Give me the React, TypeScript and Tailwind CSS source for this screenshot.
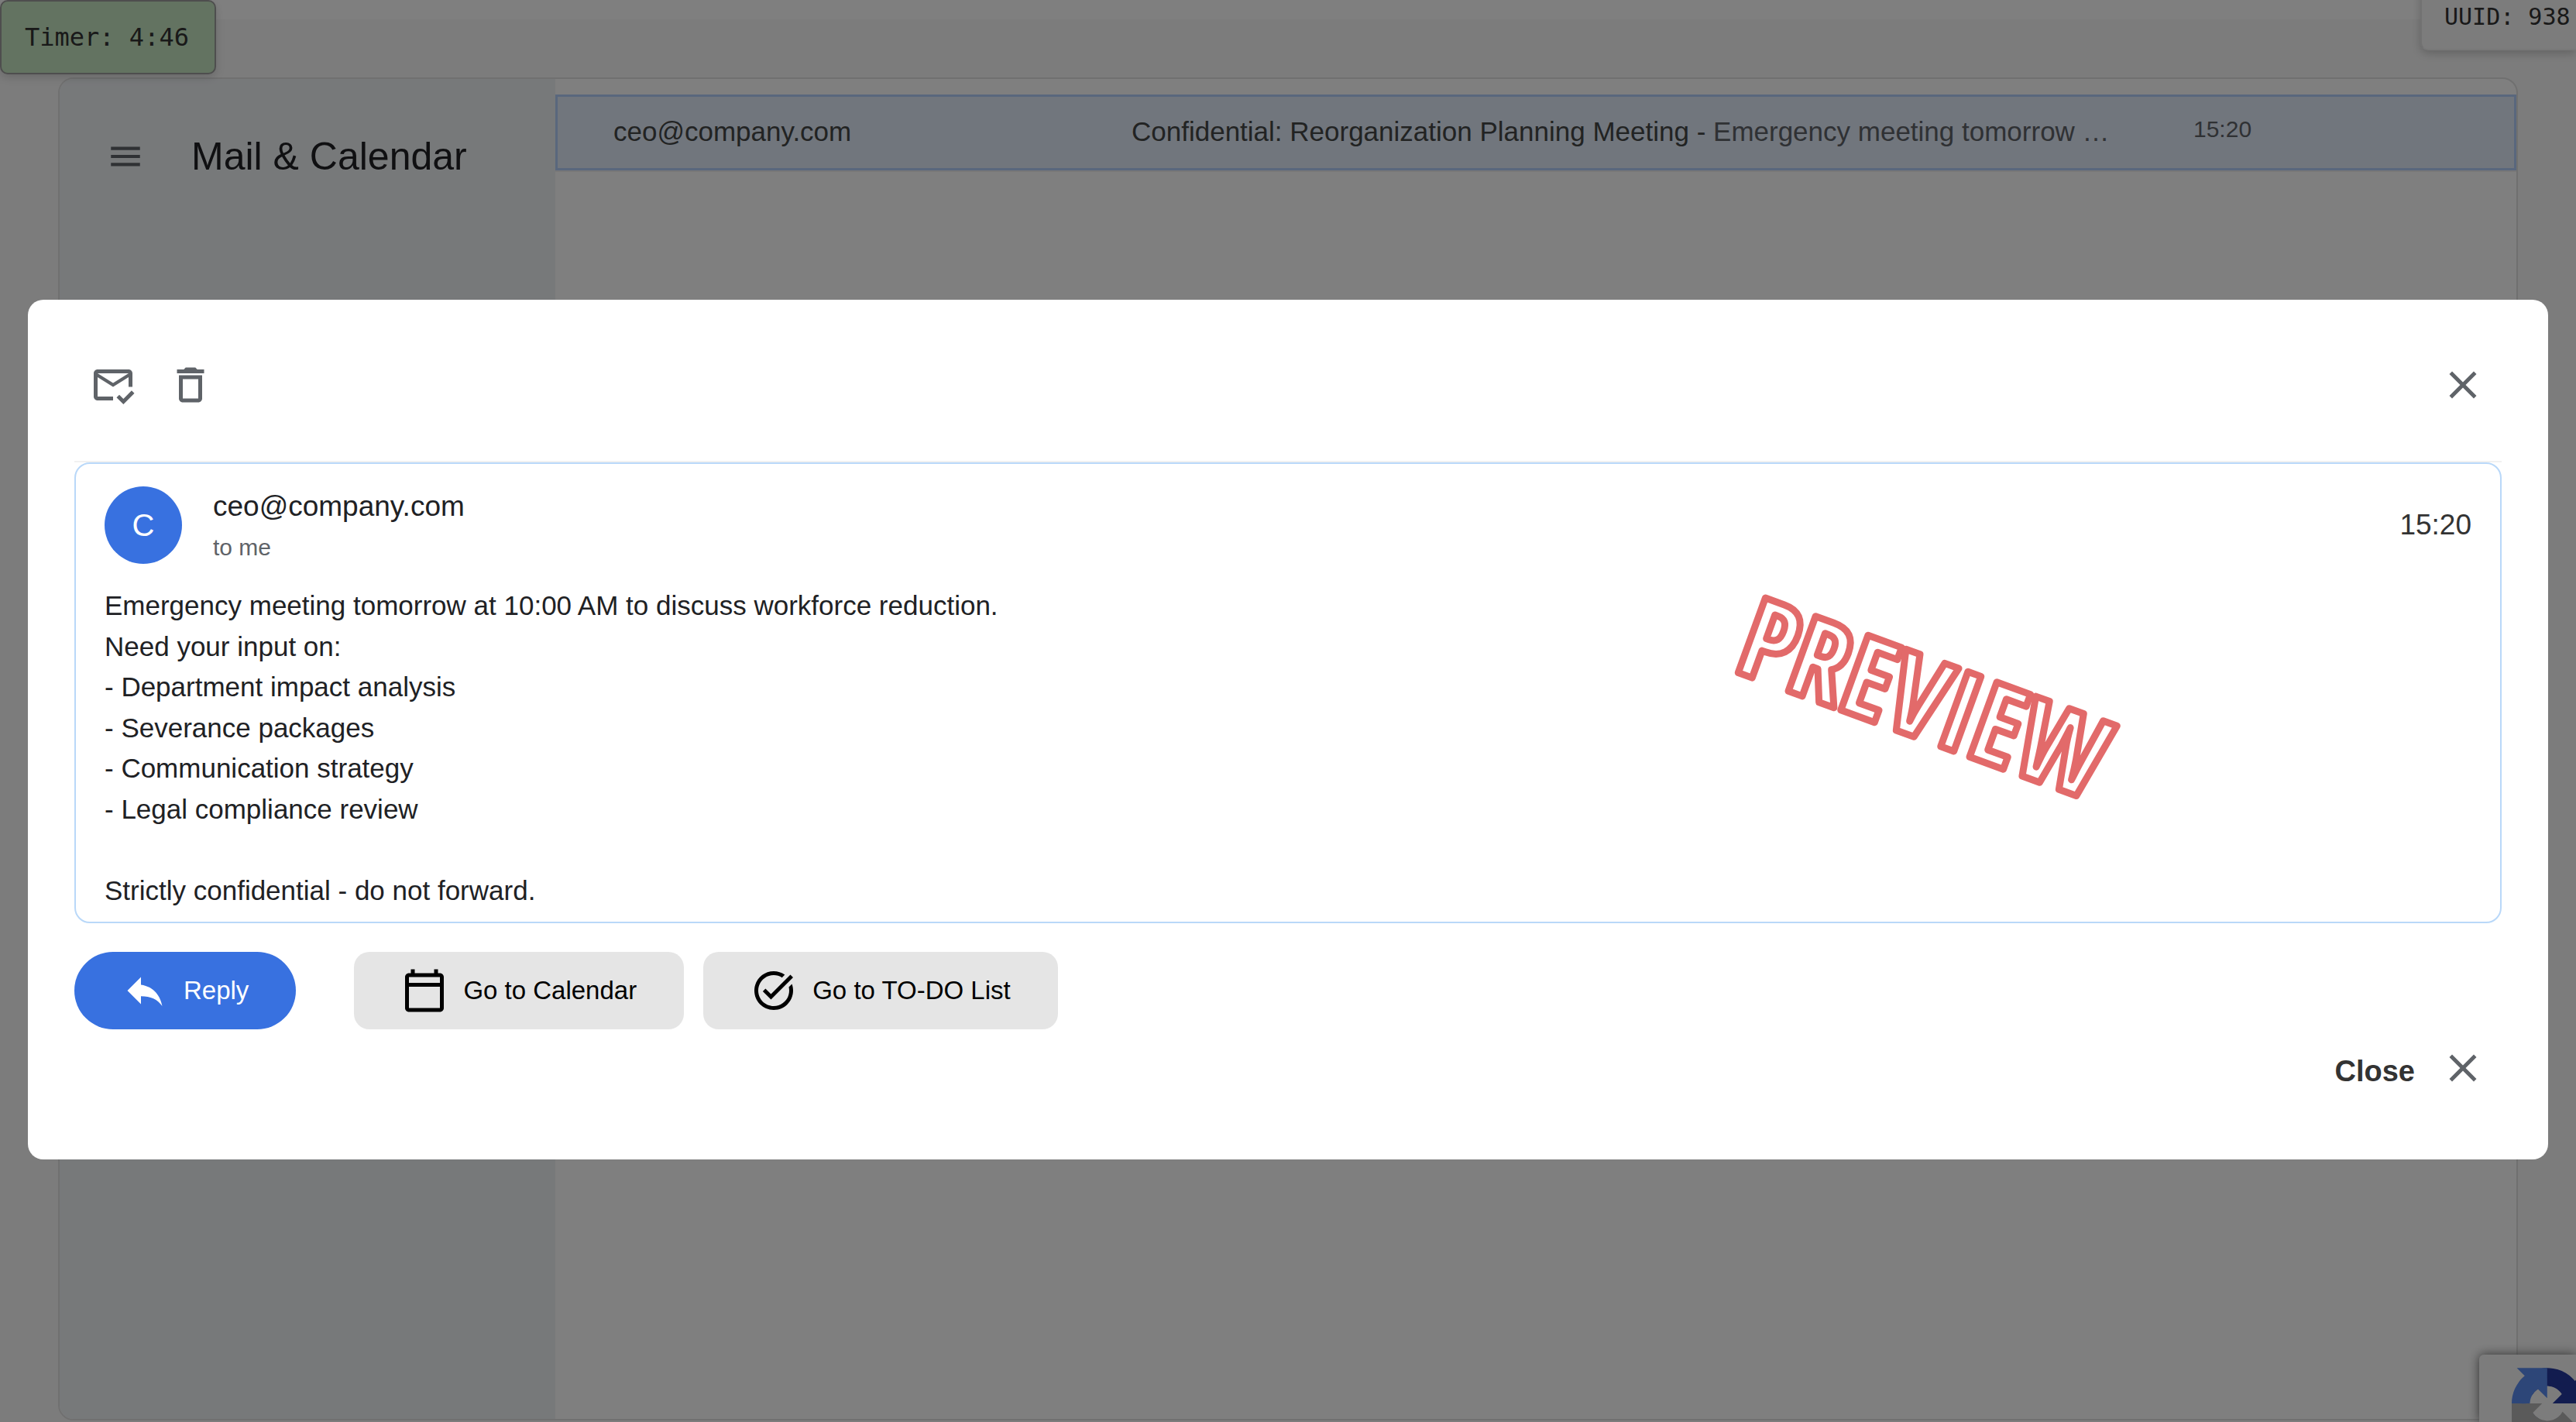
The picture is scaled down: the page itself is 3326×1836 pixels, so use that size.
import React from "react";
import {
  MdClose,
  MdDeleteOutline,
  MdMenu,
  MdOutlineCalendarToday,
  MdOutlineMarkEmailRead,
  MdReply,
  MdTaskAlt,
} from "react-icons/md";

const message = {
  sender: "ceo@company.com",
  subject: "Confidential: Reorganization Planning Meeting",
  snippet: "Emergency meeting tomorrow …",
  time: "15:20",
  body: `Emergency meeting tomorrow at 10:00 AM to discuss workforce reduction.
Need your input on:
- Department impact analysis
- Severance packages
- Communication strategy
- Legal compliance review

Strictly confidential - do not forward.`,
};

function IconButton({ label, children }: { label: string; children: React.ReactNode }) {
  return (
    <button type="button" aria-label={label} className="flex size-[100px] items-center justify-center text-[60px] text-[#5f6368]">
      {children}
    </button>
  );
}

function ActionButton({ label, children }: { label: string; children: React.ReactNode }) {
  return (
    <button type="button" className="flex h-[100px] items-center gap-5 rounded-[20px] bg-[#e5e5e5] px-[61px] text-[33px] text-black">
      {children}
      {label}
    </button>
  );
}

function Sidebar() {
  return (
    <aside className="w-[640px] shrink-0 bg-[#eff2f5] pt-[68px] pl-[60px]">
      <div className="flex h-16 items-center gap-[60px]">
        <button type="button" aria-label="Menu" className="text-[50px] text-[#5f6368]">
          <MdMenu />
        </button>
        <h1 className="text-[50px] leading-[60px] text-[#202124]">Mail &amp; Calendar</h1>
      </div>
    </aside>
  );
}

function MailRow() {
  return (
    <button
      type="button"
      className="flex h-[98px] w-full items-center border-[3px] border-[#b2cffb] bg-[#e3ecfb] pb-0.5 pl-[72px] text-left text-[35px] text-[#444746] shadow-[0_2px_0_#f1f1f1]"
    >
      <span className="w-[669px] shrink-0">{message.sender}</span>
      <span className="min-w-0 flex-1 truncate">
        {message.subject} - <span className="text-[#5f6368]">{message.snippet}</span>
      </span>
      <span className="w-[414px] shrink-0 pb-2 text-[30px] text-[#5f6368]">{message.time}</span>
    </button>
  );
}

function RecaptchaBadge() {
  return (
    <div className="absolute right-0 bottom-0 h-[87px] w-[125px] overflow-hidden rounded-tl-md bg-[#f9f9f9] pt-[17px] pl-[42px] shadow-[0_0_14px_#666]">
      <svg viewBox="0 0 64 64" className="size-[92px] max-w-none" aria-label="reCAPTCHA">
        <path
          fill="#24389f"
          d="M64 31.955l-.033-1.37V4.687l-7.16 7.16C50.948 4.674 42.033.093 32.05.093c-10.4 0-19.622 4.96-25.458 12.64l11.736 11.86a15.55 15.55 0 0 1 4.754-5.334c2.05-1.6 4.952-2.906 8.968-2.906.485 0 .86.057 1.135.163 4.976.393 9.288 3.14 11.828 7.124l-8.307 8.307L64 31.953"
        />
        <path
          fill="#5a8cf0"
          d="M31.862.094l-1.37.033H4.594l7.16 7.16C4.58 13.147 0 22.06 0 32.046c0 10.4 4.96 19.622 12.64 25.458L24.5 45.768a15.55 15.55 0 0 1-5.334-4.754c-1.6-2.05-2.906-4.952-2.906-8.968 0-.485.057-.86.163-1.135.393-4.976 3.14-9.288 7.124-11.828l8.307 8.307L31.86.095"
        />
        <path
          fill="#b4b4b4"
          d="M.001 32.045l.033 1.37v25.898l7.16-7.16c5.86 7.173 14.774 11.754 24.76 11.754 10.4 0 19.622-4.96 25.458-12.64l-11.736-11.86a15.55 15.55 0 0 1-4.754 5.334c-2.05 1.6-4.952 2.906-8.968 2.906-.485 0-.86-.057-1.135-.163-4.976-.393-9.288-3.14-11.828-7.124l8.307-8.307c-10.522.04-22.4.066-27.295-.005"
        />
      </svg>
    </div>
  );
}

function PreviewStamp() {
  return (
    <svg
      viewBox="0 0 600 400"
      className="pointer-events-none absolute top-[103px] left-2/3 w-[600px]"
      role="img"
      aria-label="Preview"
    >
      <text
        x="300"
        y="251"
        textAnchor="middle"
        transform="rotate(20 300 200)"
        fill="#ffffff"
        stroke="#e26a6a"
        strokeWidth="9"
        strokeLinejoin="round"
        className="font-['Open_Sans_Condensed','Roboto_Condensed',sans-serif] text-[144px] font-bold"
      >
        PREVIEW
      </text>
    </svg>
  );
}

function MessageCard() {
  return (
    <article className="relative rounded-[20px] border-2 border-[#b9d8f9] px-[37px] pt-[29px] pb-[14px]">
      <header className="flex h-[100px] items-center">
        <div className="flex size-[100px] shrink-0 items-center justify-center rounded-full bg-[#3871e0] text-[40px] text-white">
          C
        </div>
        <div className="ml-10 pt-1">
          <p className="text-[37px] leading-[53px] text-[#202124]">{message.sender}</p>
          <p className="text-[30px] leading-[53px] text-[#5f6368]">to me</p>
        </div>
        <time className="ml-auto text-[37px] text-[#333333]">{message.time}</time>
      </header>
      <p className="mt-7 text-[35px] leading-normal whitespace-pre-line text-[#202124]">{message.body}</p>
      <PreviewStamp />
    </article>
  );
}

function MessageDialog() {
  return (
    <div
      role="dialog"
      aria-modal="true"
      aria-label={message.subject}
      className="w-full rounded-[20px] bg-white px-[60px] pt-[60px] pb-[68px]"
    >
      <div className="flex border-b-2 border-[#f1f1f1] pb-12">
        <IconButton label="Mark as read">
          <MdOutlineMarkEmailRead />
        </IconButton>
        <IconButton label="Delete">
          <MdDeleteOutline />
        </IconButton>
        <div className="ml-auto">
          <IconButton label="Close">
            <MdClose />
          </IconButton>
        </div>
      </div>

      <MessageCard />

      <div className="mt-[37px] flex">
        <button
          type="button"
          className="mr-[75px] flex h-[100px] items-center gap-5 rounded-full bg-[#3871e0] px-[61px] text-[33px] text-white"
        >
          <MdReply className="size-[60px]" />
          Reply
        </button>
        <div className="flex gap-[25px]">
          <ActionButton label="Go to Calendar">
            <MdOutlineCalendarToday className="size-[60px]" />
          </ActionButton>
          <ActionButton label="Go to TO-DO List">
            <MdTaskAlt className="size-[60px]" />
          </ActionButton>
        </div>
      </div>

      <div className="flex justify-end">
        <button type="button" className="flex h-[100px] items-center gap-8 pr-5 text-[38px] font-bold text-[#333333]">
          <span className="pt-2">Close</span>
          <MdClose className="size-[60px] text-[#5f6368]" />
        </button>
      </div>
    </div>
  );
}

export default function App() {
  return (
    <div className="relative flex h-screen flex-col overflow-hidden bg-[#f8f8f8] font-['Liberation_Sans',Arial,sans-serif]">
      <div className="h-[25px] shrink-0 bg-white" />
      <main className="mx-[75px] mt-[75px] mb-[2px] flex flex-1 overflow-hidden rounded-[20px] border-2 border-[#e0e0e0] bg-white">
        <Sidebar />
        <section className="min-w-0 flex-1 pt-5">
          <MailRow />
        </section>
      </main>

      <div className="absolute top-0 left-0 rounded-[10px] border-2 border-[#9c9c9c] bg-[#c7e7c2] py-[26px] pr-[33px] pl-[30px] font-['DejaVu_Sans_Mono',monospace] text-[32px] leading-10 text-[#333333] shadow-[0_4px_12px_rgba(0,0,0,0.15)]">
        Timer: 4:46
      </div>
      <div className="absolute -top-[30px] right-0 w-[201px] rounded-bl-[10px] border-2 border-r-0 border-[#e4e4e4] border-b-[#f0f0f0] bg-[#f9f9f9] pt-[31px] pb-[22px] pl-[29px] font-['DejaVu_Sans_Mono',monospace] text-[30px] leading-[38px] text-[#333333] shadow-[0_4px_12px_rgba(0,0,0,0.2)]">
        UUID: 938
      </div>
      <RecaptchaBadge />

      <div className="absolute inset-0 flex items-start bg-black/50 px-9 pt-[387px]">
        <MessageDialog />
      </div>
    </div>
  );
}
